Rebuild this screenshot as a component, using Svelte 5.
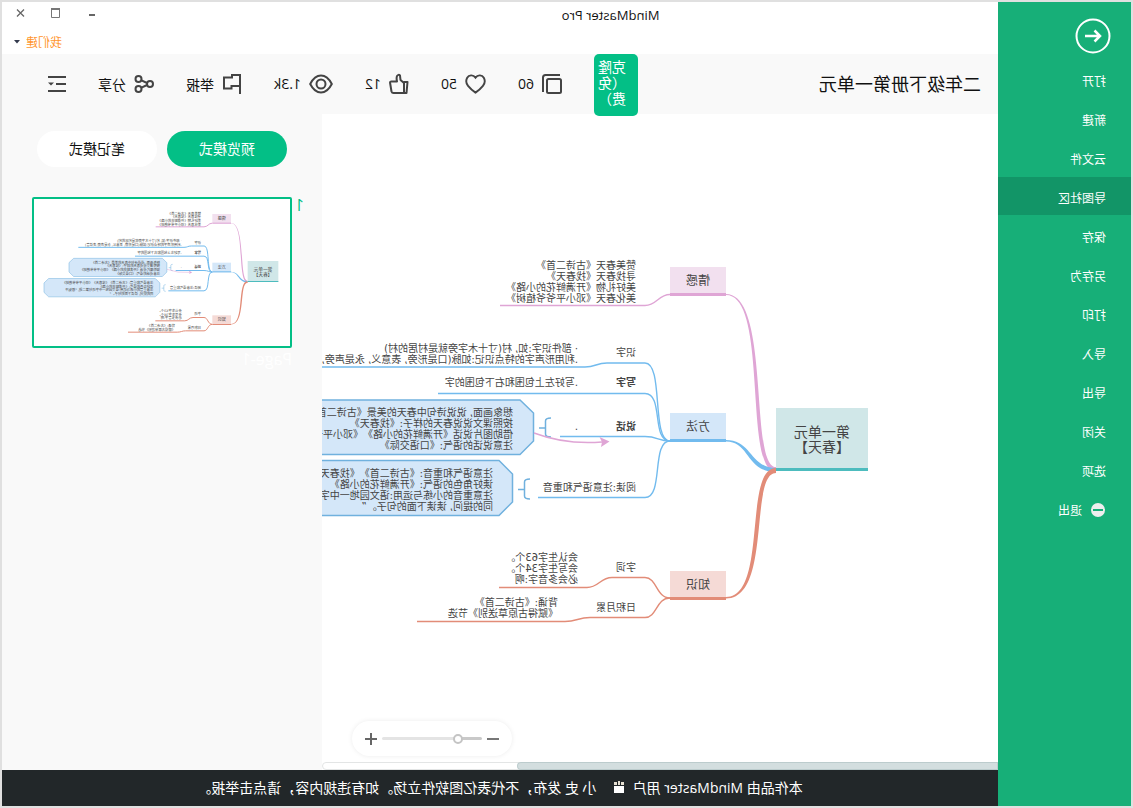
<script lang="ts">
    interface Label {
        x: number;
        y: number;
        lines: string[];
        bold?: boolean;
    }

    interface Topic {
        name: string;
        y: number;
        fill: string;
        line: string;
    }

    interface Branch {
        color: string;
        d: string;
    }

    const menu = ['打开', '新建', '云文件', '导图社区', '保存', '另存为', '打印', '导入', '导出', '关闭', '选项'];
    let activeItem = $state('导图社区');
    let mode = $state('preview');
    let zoom = $state(21);

    const PINK = '#dfa5d5';
    const BLUE = '#72bbee';
    const RED = '#e28c78';

    const topics: Topic[] = [
        { name: '情感', y: 153, fill: '#f2e0ef', line: PINK },
        { name: '方法', y: 299, fill: '#d4e7f9', line: BLUE },
        { name: '知识', y: 457, fill: '#f5dad6', line: RED }
    ];

    // trunks get thicker towards the root node
    const trunks: Branch[] = [
        { color: PINK, d: 'M222 353C249 353 227 180 272 180V181C229 181 255 358 222 358Z' },
        { color: BLUE, d: 'M222 354C248 354 246 326 272 326V327.5C248 327.5 252 358 222 358Z' },
        { color: RED, d: 'M222 354C255 354 230 483 272 483V484.5C226 484.5 249 359 222 359Z' }
    ];

    const branches: Branch[] = [
        { color: PINK, d: 'M328 180.5C340 180.5 341 191.5 353 191.5H498' },
        { color: BLUE, d: 'M328 327C347 327 334 249 353 249H391C402 249 402 253 413 253H730' },
        { color: BLUE, d: 'M328 327C347 327 334 279.5 353 279.5H560' },
        { color: BLUE, d: 'M328 327C340 327 340 322.5 353 322.5H438' },
        { color: BLUE, d: 'M328 327C347 327 334 383.5 353 383.5H460' },
        { color: RED, d: 'M328 484C342 484 341 463.5 353 463.5H386C398 463.5 399 473.5 411 473.5H499' },
        { color: RED, d: 'M328 484C342 484 341 503.5 353 503.5H408C420 503.5 421 507.5 433 507.5H581' }
    ];

    const labels: Label[] = [
        { x: 362, y: 155, lines: ['赞美春天《古诗二首》', '寻找春天《找春天》', '美好礼物《开满鲜花的小路》', '美化春天《邓小平爷爷植树》'] },
        { x: 362, y: 242, lines: ['识字'] },
        { x: 420, y: 238, lines: ['· 部件识字:如, 村(寸十木字旁就是村居的村)', '.利用形声字的特点识记:如脉(口是形旁, 表意义, 永是声旁,表读音)'] },
        { x: 362, y: 272, lines: ['写字'], bold: true },
        { x: 420, y: 272, lines: ['.写好左上包围和右下包围的字'] },
        { x: 362, y: 316, lines: ['说话'], bold: true },
        { x: 420, y: 316, lines: ['.'] },
        { x: 485, y: 302, lines: ['想象画面, 说说诗句中春天的美景《古诗二首》', '按照课文说说春天的样子:《找春天》', '借助图片说话《开满鲜花的小路》《邓小平爷爷植树》', '注意说话的语气:《口语交际》'] },
        { x: 362, y: 377, lines: ['阅读:注意语气和重音'] },
        { x: 505, y: 363, lines: ['注意语气和重音:《古诗二首》《找春天》《邓小平爷爷植树》', '读好角色的语气:《开满鲜花的小路》', '注意重音的小练与运用:语文园地一中字词句第二题, “根据不', '同的提问, 读读下面的句子。”'] },
        { x: 362, y: 457, lines: ['字词'] },
        { x: 420, y: 447, lines: ['会认生字63个。', '会写生字34个。', '必会多音字:啊'] },
        { x: 362, y: 497, lines: ['日积月累'] },
        { x: 440, y: 492, lines: ['背诵:《古诗二首》', '《赋得古原草送别》节选'] }
    ];
</script>

<svelte:head>
    <title>MindMaster Pro</title>
</svelte:head>

{#snippet mindMap()}
    {#each branches as b}
        <path d={b.d} class="branch" stroke={b.color} />
    {/each}
    {#each trunks as t}
        <path d={t.d} fill={t.color} />
    {/each}

    <rect x="130" y="294" width="92" height="63" fill="#d0e7e8" />
    <rect x="130" y="354" width="92" height="3" fill="#4dbcbe" />
    <text class="root-text" x="176" y="323">第一单元</text>
    <text class="root-text" x="176" y="338">【春天】</text>

    {#each topics as t}
        <rect x="272" y={t.y} width="56" height="29" fill={t.fill} />
        <rect x="272" y={t.y + 26} width="56" height="3" fill={t.line} />
        <text class="topic-text" x="300" y={t.y + 18}>{t.name}</text>
    {/each}

    <g fill="#d4e7f9" stroke="#70b1de" stroke-width="1.5">
        <path d="M478 286H744L758 299V327L744 340.5H478L464.5 327V299Z" />
        <path d="M499 346.5H819L833 360V388L819 401.5H499L485.5 388V360Z" />
    </g>
    <g fill="none" stroke="#70b1de" stroke-width="1.5">
        <path d="M447 304Q452.5 304 452.5 307V320Q452.5 323 447 323M452.5 314H459" />
        <path d="M468 365Q473.5 365 473.5 368V382Q473.5 385 468 385M473.5 375.5H480" />
    </g>
    <path d="M464 319Q432 331 396 328" fill="none" stroke={PINK} stroke-width="1.5" />
    <path d="M388.5 327.5L398.5 323L396 328L397 333Z" fill={PINK} />

    {#each labels as l}
        {#each l.lines as line, i}
            <text class="label" class:bold={l.bold} x={l.x} y={l.y + i * 11}>{line}</text>
        {/each}
    {/each}
{/snippet}

<div class="window">
    <aside class="sidebar">
        <button class="back" aria-label="返回">
            <svg width="36" height="36" viewBox="0 0 36 36" fill="none" stroke="#fff" stroke-width="2">
                <circle cx="18" cy="18" r="16.5" />
                <path d="M26 18H11M16.5 12.5L11 18L16.5 23.5" stroke-width="2.5" />
            </svg>
        </button>
        <nav>
            {#each menu as item}
                <button class="item" class:active={item === activeItem} onclick={() => (activeItem = item)}>{item}</button>
            {/each}
            <button class="item">
                <svg width="16" height="16" viewBox="0 0 16 16">
                    <circle cx="8" cy="8" r="7" fill="#eee" />
                    <rect x="3" y="7" width="10" height="2" fill="#17af78" />
                </svg>
                退出
            </button>
        </nav>
    </aside>

    <div class="main">
        <header class="titlebar">
            <div class="title-row">
                <h1>MindMaster Pro</h1>
                <div class="controls">
                    <button aria-label="最小化">
                        <svg width="12" height="12" viewBox="0 0 12 12"><rect x="3" y="7" width="6" height="2" fill="#666" /></svg>
                    </button>
                    <button aria-label="最大化">
                        <svg width="12" height="12" viewBox="0 0 12 12"><path d="M2.5 2V10.5H10.5V2" fill="none" stroke="#777" /><path d="M2 2H11" stroke="#777" stroke-width="2" /></svg>
                    </button>
                    <button aria-label="关闭窗口">
                        <svg width="12" height="12" viewBox="0 0 12 12"><path d="M2 2.5L9 9.5M9 2.5L2 9.5" stroke="#666" stroke-width="1.3" /></svg>
                    </button>
                </div>
            </div>
            <button class="user">
                我们建
                <svg width="6" height="4" viewBox="0 0 6 4"><path d="M0 0H6L3 3.5Z" fill="#333a4d" /></svg>
            </button>
        </header>

        <div class="toolbar">
            <h2>二年级下册第一单元</h2>
            <button class="clone">克隆（免费）</button>
            <div class="stats">
                <button class="stat">
                    <svg width="20" height="22" viewBox="0 0 20 22" fill="none" stroke="#444" stroke-width="2">
                        <path d="M2 2H16.5Q19 2 19 4.5V19" />
                        <rect x="1" y="6" width="14" height="14" rx="1.5" />
                    </svg>
                    60
                </button>
                <button class="stat">
                    <svg width="21" height="22" viewBox="0 0 22 22" fill="none" stroke="#444" stroke-width="2">
                        <path d="M11 4.3C8.5 0.8 4 1.5 2.3 4.5C0.6 7.6 1.2 10.5 3.2 13C5.2 15.5 8 18 11 20C14 18 16.8 15.5 18.8 13C20.8 10.5 21.4 7.6 19.7 4.5C18 1.5 13.5 0.8 11 4.3Z" />
                    </svg>
                    50
                </button>
                <button class="stat">
                    <svg width="20" height="22" viewBox="0 0 20 22" fill="none" stroke="#444" stroke-width="2" stroke-linejoin="round">
                        <path d="M1.5 9H5V20H2.5Z" />
                        <path d="M5 10L8.5 7L9 2.5Q10.5 1 12 3Q12.8 5 12 8.5H17.5Q19.2 8.5 18.9 10L17.5 18.5Q17 20 15.5 20H5" />
                    </svg>
                    12
                </button>
                <button class="stat">
                    <svg width="24" height="22" viewBox="0 0 24 22" fill="none" stroke="#444" stroke-width="2">
                        <path d="M1.2 11C4 5.5 7.5 2.5 12 2.5S20 5.5 22.8 11C20 16.5 16.5 19.5 12 19.5S4 16.5 1.2 11Z" />
                        <circle cx="12" cy="11" r="4.5" />
                    </svg>
                    1.3k
                </button>
                <button class="stat">
                    <svg width="20" height="22" viewBox="0 0 20 22" fill="none" stroke="#444" stroke-width="2">
                        <path d="M2 21V2H10V4.5H18V15.5H10.5V13H2" />
                    </svg>
                    举报
                </button>
                <button class="stat">
                    <svg width="20" height="22" viewBox="0 0 20 22" fill="none" stroke="#444" stroke-width="2">
                        <circle cx="4" cy="11" r="3" />
                        <circle cx="15.5" cy="6" r="3" />
                        <circle cx="15.5" cy="16" r="3" />
                        <path d="M7 10L12.5 7.3M7 12L12.5 14.7" />
                    </svg>
                    分享
                </button>
                <button class="stat" aria-label="大纲">
                    <svg width="18" height="22" viewBox="0 0 18 22" stroke="#444" stroke-width="2">
                        <path d="M0 4H18M0 11H10M0 18H18" />
                        <path d="M12 9.5H18L15 12.5Z" fill="#444" stroke="none" />
                    </svg>
                </button>
            </div>
        </div>

        <div class="content">
            <section class="canvas">
                <svg class="map">
                    {@render mindMap()}
                </svg>
                <div class="scrollbar"><div class="thumb"></div></div>
                <div class="zoom">
                    <button aria-label="缩小"><svg width="12" height="12" viewBox="0 0 12 12"><rect y="5" width="12" height="2" fill="#777" /></svg></button>
                    <input type="range" min="0" max="100" bind:value={zoom} aria-label="缩放" style="--value: {zoom}%" />
                    <button aria-label="放大"><svg width="12" height="12" viewBox="0 0 12 12"><path d="M0 6H12M6 0V12" stroke="#666" stroke-width="2" /></svg></button>
                </div>
            </section>

            <aside class="panel">
                <div class="modes">
                    <button class:active={mode === 'preview'} onclick={() => (mode = 'preview')}>预览模式</button>
                    <button class:active={mode === 'note'} onclick={() => (mode = 'note')}>笔记模式</button>
                </div>
                <div class="page">
                    <span class="number">1</span>
                    <figure>
                        <svg class="preview" viewBox="95 108 768 441" aria-hidden="true">
                            {@render mindMap()}
                        </svg>
                        <figcaption>Page-1</figcaption>
                    </figure>
                </div>
            </aside>
        </div>

        <footer>
            <span>本作品由 MindMaster 用户</span>
            <svg width="12" height="12" viewBox="0 0 12 12">
                <path d="M1 5H11V12H1Z" fill="#fff" />
                <path d="M1 1H4V4H1ZM5 0H7V4H5ZM8 1H11V4H8Z" fill="#e6e0d2" />
            </svg>
            <span>小 史 发布，不代表亿图软件立场。如有违规内容，请点击举报。</span>
        </footer>
    </div>
</div>

<style>
    :global(body) {
        margin: 0;
    }

    /* the whole interface is shown as seen in a mirror */
    .window {
        display: grid;
        grid-template-columns: 133px 1fr;
        min-height: 100vh;
        box-sizing: border-box;
        border: 2px solid #e0e0e0;
        background: #fff;
        color: #111;
        font-family: 'Open Sans', 'Noto Sans CJK SC', sans-serif;
        font-size: 14px;
        text-spacing-trim: space-all;
        overflow: hidden;
        transform: scaleX(-1);
    }

    button {
        padding: 0;
        border: none;
        background: none;
        color: inherit;
        font: inherit;
        cursor: pointer;
    }

    svg {
        display: block;
        flex: none;
    }

    .sidebar {
        background: #17af78;
        color: #fff;
        font-size: 12px;
    }

    .back {
        display: block;
        margin: 16px 0 6px 20px;
    }

    .item {
        display: flex;
        align-items: center;
        gap: 8px;
        width: 100%;
        height: 38px;
        margin-bottom: 1px;
        padding: 4px 0 0 25px;
    }

    .item.active {
        background: #129567;
    }

    .main {
        display: flex;
        flex-direction: column;
        min-width: 0;
    }

    .titlebar {
        display: flex;
        flex-direction: column;
        height: 52px;
    }

    .title-row {
        display: flex;
        align-items: center;
        justify-content: space-between;
        height: 26px;
        padding: 0 12px 0 34%;
    }

    h1 {
        margin: 0;
        font-size: 13px;
        font-weight: 400;
    }

    .controls {
        display: flex;
        gap: 24px;
        padding-bottom: 4px;
    }

    .user {
        display: flex;
        align-items: center;
        align-self: flex-end;
        gap: 6px;
        height: 26px;
        margin-right: 12px;
        padding-top: 2px;
        color: #ff962e;
        font-size: 12px;
    }

    .toolbar {
        display: flex;
        align-items: center;
        height: 60px;
        padding: 0 46px 0 17px;
        background: #f9f9f9;
    }

    h2 {
        flex: 1;
        margin: 0;
        padding-bottom: 2px;
        font-size: 18px;
        font-weight: 400;
        white-space: nowrap;
    }

    .clone {
        align-self: flex-start;
        flex: none;
        width: 44px;
        height: 62px;
        margin-right: 32px;
        padding: 5px 4px 9px 12px;
        border-radius: 5px;
        background: #03bf86;
        color: #fff;
        line-height: 16px;
        text-align: left;
    }

    .stats {
        display: flex;
        gap: 32px;
    }

    .stat {
        display: flex;
        align-items: center;
        gap: 8px;
        padding-bottom: 1px;
    }

    .content {
        display: flex;
        flex: 1;
    }

    .canvas {
        position: relative;
        display: flex;
        flex: 1;
        flex-direction: column;
        min-width: 0;
    }

    .map {
        flex: 1;
        width: 100%;
        overflow: hidden;
    }

    .branch {
        fill: none;
        stroke-width: 1.4;
    }

    .preview .branch {
        stroke-width: 3;
    }

    .root-text,
    .topic-text {
        fill: #444;
        text-anchor: middle;
    }

    .root-text {
        font-size: 14px;
    }

    .topic-text {
        font-size: 12px;
    }

    .label {
        fill: #444;
        font-family: 'DejaVu Sans', 'Noto Sans CJK SC', sans-serif;
        font-size: 10px;
    }

    .bold {
        font-weight: 700;
    }

    .scrollbar {
        height: 8px;
        box-sizing: border-box;
        border: 1px solid #e3e5e5;
        border-radius: 4px;
    }

    .thumb {
        width: 71%;
        height: 6px;
        border-radius: 0 3px 3px 0;
        background: #d3dedf;
        box-shadow: 0 0 0 1px #bccccd;
    }

    .zoom {
        position: absolute;
        right: 30px;
        bottom: 14px;
        display: flex;
        align-items: center;
        justify-content: space-between;
        width: 160px;
        height: 35px;
        box-sizing: border-box;
        padding: 0 13px;
        border-radius: 18px;
        background: #fff;
        box-shadow: 0 0 5px rgba(0, 0, 0, 0.08);
    }

    .zoom input {
        width: 100px;
        height: 10px;
        margin: 0;
        appearance: none;
        background: none;
    }

    .zoom input::-webkit-slider-runnable-track {
        height: 3px;
        border-radius: 2px;
        background: linear-gradient(to right, #c9c9c9 var(--value), #e4e4e4 var(--value));
    }

    .zoom input::-webkit-slider-thumb {
        width: 10px;
        height: 10px;
        margin-top: -3px;
        box-sizing: border-box;
        appearance: none;
        border: 2px solid #c4c4c4;
        border-radius: 50%;
        background: #fff;
    }

    .panel {
        width: 320px;
        background: #f9f9f9;
    }

    .modes {
        display: flex;
        justify-content: center;
        gap: 10px;
        padding-top: 17px;
    }

    .modes button {
        width: 120px;
        height: 36px;
        padding-bottom: 2px;
        border-radius: 18px;
        background: #fff;
    }

    .modes button.active {
        background: #03bf86;
        color: #fff;
    }

    .page {
        display: flex;
        gap: 3px;
        padding: 30px 30px 0 18px;
    }

    .number {
        width: 9px;
        color: #03bf86;
        font-size: 16px;
        line-height: 16px;
    }

    figure {
        flex: 1;
        margin: 0;
    }

    .preview {
        width: 100%;
        box-sizing: border-box;
        border: 2px solid #03bf86;
        border-radius: 2px;
        background: #fff;
    }

    figcaption {
        color: #fff;
        font-size: 16px;
        line-height: 22px;
    }

    footer {
        display: flex;
        align-items: center;
        justify-content: center;
        gap: 8px;
        height: 36px;
        box-sizing: border-box;
        padding-bottom: 2px;
        background: #222729;
        color: #fff;
    }

    footer span:last-child {
        padding-left: 8px;
    }
</style>
